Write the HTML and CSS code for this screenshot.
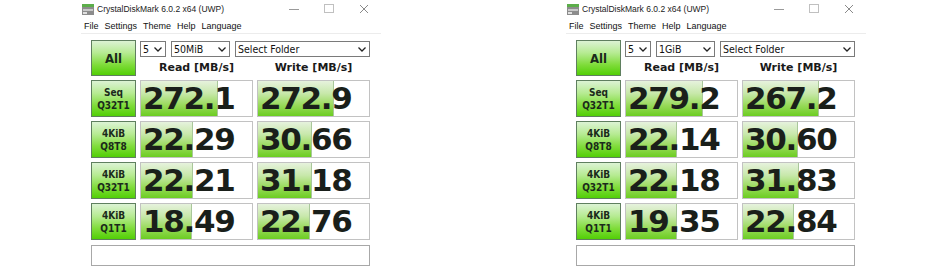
FILE: index.html
```html
<!DOCTYPE html>
<html lang="en">
<head>
    <meta charset="UTF-8">
    <title>CrystalDiskMark x2</title>
    <link rel="stylesheet" href="styles.css">
</head>
<body>
    <div class="page">

        <!-- left window: 50MiB -->
        <div class="window">
            <div class="titlebar">
                <svg class="app-icon" width="12" height="11" viewBox="0 0 12 11">
                    <rect x="0" y="0" width="12" height="3" fill="#5cae4a"/>
                    <rect x="0" y="3" width="12" height="8" fill="#8c8c8c"/>
                    <rect x="1" y="5" width="10" height="2" fill="#c8c8c8"/>
                    <rect x="1" y="8" width="4" height="2" fill="#e0e0e0"/>
                </svg>
                <span class="title">CrystalDiskMark 6.0.2 x64 (UWP)</span>
                <div class="controls">
                    <span class="ctl"><svg width="10" height="10" viewBox="0 0 10 10"><line x1="0" y1="5.5" x2="10" y2="5.5" stroke="#9a9a9a"/></svg></span>
                    <span class="ctl"><svg width="10" height="10" viewBox="0 0 10 10"><rect x="0.5" y="0.5" width="9" height="8" fill="none" stroke="#c0c0c0"/></svg></span>
                    <span class="ctl"><svg width="10" height="10" viewBox="0 0 10 10"><path d="M1 1 L9 9 M9 1 L1 9" stroke="#8a8a8a" stroke-width="1"/></svg></span>
                </div>
            </div>
            <div class="menubar">
                <span>File</span><span>Settings</span><span>Theme</span><span>Help</span><span>Language</span>
            </div>
            <div class="main">
                <div class="btn all">All</div>
                <div class="top-right">
                    <div class="selects">
                        <div class="select s-count"><span>5</span><svg width="8" height="5" viewBox="0 0 8 5"><polyline points="0.5,0.5 4,4 7.5,0.5" fill="none" stroke="#222" stroke-width="1.3"/></svg></div>
                        <div class="select s-size"><span>50MiB</span><svg width="8" height="5" viewBox="0 0 8 5"><polyline points="0.5,0.5 4,4 7.5,0.5" fill="none" stroke="#222" stroke-width="1.3"/></svg></div>
                        <div class="select s-folder"><span>Select Folder</span><svg width="8" height="5" viewBox="0 0 8 5"><polyline points="0.5,0.5 4,4 7.5,0.5" fill="none" stroke="#222" stroke-width="1.3"/></svg></div>
                    </div>
                    <div class="heads">
                        <span>Read [MB/s]</span><span>Write [MB/s]</span>
                    </div>
                </div>

                <div class="btn label">Seq<br>Q32T1</div>
                <div class="cell"><div class="bar" style="width:77px"></div><span class="num">272.1</span></div>
                <div class="cell"><div class="bar" style="width:76px"></div><span class="num">272.9</span></div>

                <div class="btn label">4KiB<br>Q8T8</div>
                <div class="cell"><div class="bar" style="width:52px"></div><span class="num">22.29</span></div>
                <div class="cell"><div class="bar" style="width:54px"></div><span class="num">30.66</span></div>

                <div class="btn label">4KiB<br>Q32T1</div>
                <div class="cell"><div class="bar" style="width:52px"></div><span class="num">22.21</span></div>
                <div class="cell"><div class="bar" style="width:54px"></div><span class="num">31.18</span></div>

                <div class="btn label">4KiB<br>Q1T1</div>
                <div class="cell"><div class="bar" style="width:51px"></div><span class="num">18.49</span></div>
                <div class="cell"><div class="bar" style="width:52px"></div><span class="num">22.76</span></div>

                <div class="comment"></div>
            </div>
        </div>

        <!-- right window: 1GiB -->
        <div class="window">
            <div class="titlebar">
                <svg class="app-icon" width="12" height="11" viewBox="0 0 12 11">
                    <rect x="0" y="0" width="12" height="3" fill="#5cae4a"/>
                    <rect x="0" y="3" width="12" height="8" fill="#8c8c8c"/>
                    <rect x="1" y="5" width="10" height="2" fill="#c8c8c8"/>
                    <rect x="1" y="8" width="4" height="2" fill="#e0e0e0"/>
                </svg>
                <span class="title">CrystalDiskMark 6.0.2 x64 (UWP)</span>
                <div class="controls">
                    <span class="ctl"><svg width="10" height="10" viewBox="0 0 10 10"><line x1="0" y1="5.5" x2="10" y2="5.5" stroke="#9a9a9a"/></svg></span>
                    <span class="ctl"><svg width="10" height="10" viewBox="0 0 10 10"><rect x="0.5" y="0.5" width="9" height="8" fill="none" stroke="#c0c0c0"/></svg></span>
                    <span class="ctl"><svg width="10" height="10" viewBox="0 0 10 10"><path d="M1 1 L9 9 M9 1 L1 9" stroke="#8a8a8a" stroke-width="1"/></svg></span>
                </div>
            </div>
            <div class="menubar">
                <span>File</span><span>Settings</span><span>Theme</span><span>Help</span><span>Language</span>
            </div>
            <div class="main">
                <div class="btn all">All</div>
                <div class="top-right">
                    <div class="selects">
                        <div class="select s-count"><span>5</span><svg width="8" height="5" viewBox="0 0 8 5"><polyline points="0.5,0.5 4,4 7.5,0.5" fill="none" stroke="#222" stroke-width="1.3"/></svg></div>
                        <div class="select s-size"><span>1GiB</span><svg width="8" height="5" viewBox="0 0 8 5"><polyline points="0.5,0.5 4,4 7.5,0.5" fill="none" stroke="#222" stroke-width="1.3"/></svg></div>
                        <div class="select s-folder"><span>Select Folder</span><svg width="8" height="5" viewBox="0 0 8 5"><polyline points="0.5,0.5 4,4 7.5,0.5" fill="none" stroke="#222" stroke-width="1.3"/></svg></div>
                    </div>
                    <div class="heads">
                        <span>Read [MB/s]</span><span>Write [MB/s]</span>
                    </div>
                </div>

                <div class="btn label">Seq<br>Q32T1</div>
                <div class="cell"><div class="bar" style="width:77px"></div><span class="num">279.2</span></div>
                <div class="cell"><div class="bar" style="width:76px"></div><span class="num">267.2</span></div>

                <div class="btn label">4KiB<br>Q8T8</div>
                <div class="cell"><div class="bar" style="width:51px"></div><span class="num">22.14</span></div>
                <div class="cell"><div class="bar" style="width:55px"></div><span class="num">30.60</span></div>

                <div class="btn label">4KiB<br>Q32T1</div>
                <div class="cell"><div class="bar" style="width:51px"></div><span class="num">22.18</span></div>
                <div class="cell"><div class="bar" style="width:56px"></div><span class="num">31.83</span></div>

                <div class="btn label">4KiB<br>Q1T1</div>
                <div class="cell"><div class="bar" style="width:51px"></div><span class="num">19.35</span></div>
                <div class="cell"><div class="bar" style="width:51px"></div><span class="num">22.84</span></div>

                <div class="comment"></div>
            </div>
        </div>

    </div>
</body>
</html>
```

FILE: styles.css
```css
* { margin: 0; padding: 0; box-sizing: border-box; }
body { background: #fff; font-family: "Liberation Sans", Arial, sans-serif; color: #111; }
.page { display: flex; gap: 185px; padding-left: 81px; }
.window { width: 300px; }

/* title bar + menu */
.titlebar { height: 18px; display: flex; align-items: center; }
.app-icon { margin-left: 1px; }
.title { margin-left: 3px; font-size: 8.5px; color: #222; }
.controls { margin-left: auto; display: flex; }
.ctl { width: 35px; height: 18px; display: flex; align-items: center; justify-content: center; }
.menubar { height: 16px; display: flex; align-items: center; font-size: 9px; color: #111; border-bottom: 1px solid #ececec; }
.menubar span { padding: 0 3px; }

/* main panel */
.main { display: grid; grid-template-columns: 45px 113px 113px; grid-template-rows: 36px repeat(4, 37px) 22px; column-gap: 4px; row-gap: 4px; padding: 6px 0 0 10px; }

.btn { border: 1px solid #5f7f5f; background: linear-gradient(#dcf3d4 0%, #b6eb92 35%, #7fdc3a 70%, #52cf06 100%); display: flex; align-items: center; justify-content: center; text-align: center; color: #1b2a1b; font-family: "DejaVu Sans Condensed", "DejaVu Sans", sans-serif; font-weight: bold; }
.all { font-size: 13px; }
.label { font-size: 10px; line-height: 12.5px; padding-top: 2px; }

.top-right { grid-column: 2 / 4; display: flex; flex-direction: column; }
.selects { display: flex; gap: 5px; margin-top: 1px; }
.select { height: 16px; border: 1px solid #7a7a7a; background: #fff; display: flex; align-items: center; justify-content: space-between; padding: 0 3px 0 2px; font-family: "DejaVu Sans Condensed", "DejaVu Sans", sans-serif; font-size: 10.5px; color: #111; }
.s-count { width: 26px; }
.s-size { width: 59px; }
.s-folder { width: 135px; }
.heads { display: grid; grid-template-columns: 113px 113px; column-gap: 4px; margin-top: 4px; text-align: center; font-family: "DejaVu Sans", sans-serif; font-weight: bold; font-size: 11px; color: #1a1a1a; }

.cell { border: 1px solid #c2c2c2; background: #fff; display: grid; }
.bar { grid-area: 1 / 1; height: 100%; background: linear-gradient(#e6f2dd 0%, #c8e8ab 35%, #97da58 70%, #6ccd22 100%); border-right: 1px solid #a9c79a; }
.num { grid-area: 1 / 1; align-self: center; padding-left: 2px; font-family: "DejaVu Sans", sans-serif; font-weight: bold; font-size: 31px; line-height: 35px; color: #1a1f1a; letter-spacing: -1.3px; }

.comment { grid-column: 1 / 4; border: 1px solid #a8a8a8; background: #fff; margin-top: 1px; }
```
